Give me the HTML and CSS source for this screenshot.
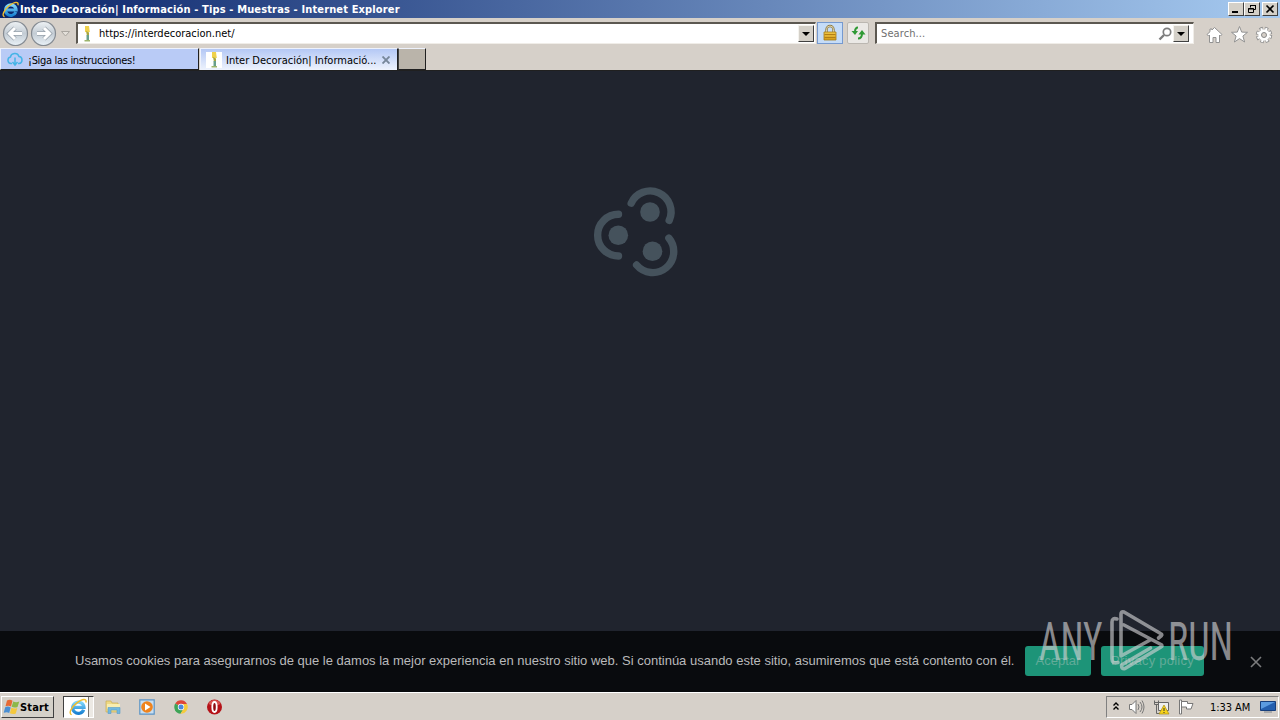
FILE: index.html
```html
<!DOCTYPE html>
<html lang="es">

<head>
    <meta charset="UTF-8" />
    <meta name="viewport" content="width=device-width, initial-scale=1.0" />
    <link rel="stylesheet" href="styles.css">
    <title>Inter Decoración| Información - Tips - Muestras</title>
</head>

<body>
    <svg width="0" height="0" class="defs">
        <defs>
            <linearGradient id="blue" x1="0" y1="0" x2="0" y2="1">
                <stop offset="0" stop-color="#7fd6fb" />
                <stop offset="1" stop-color="#1a82d2" />
            </linearGradient>
            <linearGradient id="gold" x1="0" y1="0" x2="0" y2="1">
                <stop offset="0" stop-color="#f2c94a" />
                <stop offset="1" stop-color="#d39a17" />
            </linearGradient>
            <linearGradient id="nav" x1="0" y1="0" x2="0" y2="1">
                <stop offset="0" stop-color="#eef2f5" />
                <stop offset=".5" stop-color="#c3ccd4" />
                <stop offset="1" stop-color="#e9f1f7" />
            </linearGradient>
            <symbol id="ie" viewBox="0 0 16 16">
                <path d="M13 10.400A5 5 0 1 1 13.300 8.400H4.600" fill="none" stroke="url(#blue)" stroke-width="2.900" />
                <path d="M2.400 14.800C-.8 13.900 2 8.200 7 4.300S15.900.2 15 4" fill="none" stroke="#f0bd2e" stroke-width="1.300" />
            </symbol>
            <symbol id="lamp" viewBox="0 0 16 16">
                <path d="M0 0h16v16H0z" fill="#fff" />
                <path d="M6 0h4l.8 6H6z" fill="#efd14c" />
                <path d="M7 5l3 1.500V10H8z" fill="#a8a640" />
                <path d="M7.500 9h2.500v6H7.500z" fill="#68a08a" />
                <path d="M5.500 14h5.500v1.500H5.500z" fill="#9cb46d" />
            </symbol>
        </defs>
    </svg>

    <header class="titlebar">
        <svg class="ie-icon" width="17" height="17"><use href="#ie" /></svg>
        <h1>Inter Decoración| Información - Tips - Muestras - Internet Explorer</h1>
        <div class="win-btns">
            <button type="button" class="win"><svg width="12" height="10"><path d="M2 8h6" stroke="#000" stroke-width="2" /></svg></button>
            <button type="button" class="win"><svg width="12" height="10" fill="none" stroke="#000"><path d="M4.500 3.500v-2h5v4h-2M4 1.500h6M2.500 4.500h5v4h-5zM2 5h6" /></svg></button>
            <button type="button" class="win close"><svg width="12" height="10"><path d="M2.500 1.500l7 7M9.500 1.500l-7 7" stroke="#000" stroke-width="1.700" /></svg></button>
        </div>
    </header>

    <nav class="toolbar">
        <svg class="nav-btns" width="74" height="30" fill="none">
            <circle cx="15.500" cy="15.500" r="12" fill="url(#nav)" stroke="#858b92" stroke-width="1.200" />
            <circle cx="43.500" cy="15.500" r="12" fill="url(#nav)" stroke="#858b92" stroke-width="1.200" />
            <path d="M22 15.500H10M15 10l-5.500 5.500L15 21" stroke="#98a2ac" stroke-width="4.500" />
            <path d="M37 15.500h12M44 10l5.500 5.500L44 21" stroke="#98a2ac" stroke-width="4.500" />
            <path d="M22 15.500H10M15 10l-5.500 5.500L15 21" stroke="#fff" stroke-width="3" />
            <path d="M37 15.500h12M44 10l5.500 5.500L44 21" stroke="#fff" stroke-width="3" />
            <path d="M61.500 13.500h8l-4 4.500z" fill="#e4e0da" stroke="#aaa6a0" />
        </svg>
        <div class="field address">
            <svg width="16" height="16"><use href="#lamp" /></svg>
            <span class="url">https://interdecoracion.net/</span>
            <button type="button" class="drop"></button>
        </div>
        <button type="button" class="tool lock">
            <svg width="16" height="18">
                <path d="M4.500 9V5.500a3.500 3.500 0 0 1 7 0V9" fill="none" stroke="#8d7a45" stroke-width="2.400" />
                <path d="M4.500 9V5.500a3.500 3.500 0 0 1 7 0V9" fill="none" stroke="#ddd3ac" />
                <path d="M2 8h12v8H2z" fill="url(#gold)" stroke="#a67b18" stroke-width=".8" />
                <path d="M2.500 10.500h11M2.500 13.500h11" stroke="#b27f15" />
            </svg>
        </button>
        <button type="button" class="tool refresh">
            <svg width="18" height="18" fill="none" stroke="#2f9a35" stroke-width="2">
                <path d="M9 3.500C6.500 3.500 6 5 6 8M9 14.500c2.500 0 4-1.500 4-5" />
                <path d="M2.500 7h6.500L6 11zM9.500 10.500h7L13 6z" fill="#2f9a35" stroke="none" />
            </svg>
        </button>
        <div class="field search">
            <span>Search...</span>
            <svg width="15" height="16" fill="none" stroke="#7d7d7d"><circle cx="9" cy="6" r="3.700" stroke-width="1.700" /><path d="M6 9l-4.500 4.500" stroke-width="2.400" /></svg>
            <button type="button" class="drop"></button>
        </div>
        <svg class="commands" width="72" height="20" fill="#fff" stroke="#929292">
            <path d="M8.500 2.500l7.500 7-1.500 1.500-1-1v7.500h-3.500v-5H7v5H3.500V10l-1 1L1 9.500 4 6.700V4h2v1z" />
            <path d="M33.500 1.500l2.200 5.600 5.800.2-4.600 3.700 1.700 6-5.100-3.400-5.100 3.400 1.700-6-4.600-3.700 5.800-.2z" />
            <circle cx="58" cy="10" r="6" stroke-width="4.500" stroke-dasharray="3 1.712" />
            <circle cx="58" cy="10" r="5.300" stroke-width="1.500" />
            <circle cx="58" cy="10" r="5.800" stroke="#fff" stroke-width="3" stroke-dasharray="1.800 2.755" stroke-dashoffset="-.6" />
            <circle cx="58" cy="10" r="4.800" stroke="none" />
            <circle cx="58" cy="10" r="2.500" fill="#d6d0c9" stroke="#888" />
        </svg>
    </nav>

    <div class="tabs">
        <div class="tab">
            <svg width="16" height="16" fill="none" stroke="#45b4e6" stroke-width="1.500">
                <path d="M5 12.500H4A3.300 3.300 0 0 1 3.500 6C4 2 10.500 1 12 5.500c4 .3 4 6.500 0 7h-1M8 6.500v7M5.500 11L8 14l2.500-3" />
            </svg>
            <span>¡Siga las instrucciones!</span>
        </div>
        <div class="tab active">
            <svg width="16" height="16"><use href="#lamp" /></svg>
            <span>Inter Decoración| Informació...</span>
            <svg class="tab-close" width="8" height="8"><path d="M.5.5l7 7M7.500.5l-7 7" stroke="#77879a" stroke-width="1.900" /></svg>
        </div>
        <div class="tab new"></div>
    </div>

    <main class="page">
        <svg class="loader" width="90" height="94" viewBox="590 185 90 94" fill="none" stroke="#45525c" stroke-width="7.400" stroke-linecap="round">
            <path d="M618.500 214.300a20 20 0 0 0 0 41.700" />
            <path d="M631.200 203.200a20 20 0 0 1 38 17.200" />
            <path d="M668.900 238.200a20 20 0 0 1-32.300 26.800" />
            <g fill="#45525c" stroke="none">
                <circle cx="618.300" cy="235.200" r="9.800" />
                <circle cx="650" cy="212" r="9.800" />
                <circle cx="652.500" cy="251.300" r="9.800" />
            </g>
        </svg>
        <div class="cookies">
            <p>Usamos cookies para asegurarnos de que le damos la mejor experiencia en nuestro sitio web. Si continúa usando este sitio, asumiremos que está contento con él.</p>
            <button type="button" class="btn accept">Aceptar</button>
            <button type="button" class="btn policy">Privacy policy</button>
            <svg class="cookie-close" width="12" height="12"><path d="M1 1l10 10M11 1L1 11" stroke="#7b7c7d" stroke-width="1.600" /></svg>
        </div>
        <svg class="watermark" width="200" height="70" viewBox="1035 605 200 70">
            <text x="1039" y="659.500" textLength="63.500" lengthAdjust="spacingAndGlyphs">ANY</text>
            <text x="1168" y="659.500" textLength="65" lengthAdjust="spacingAndGlyphs">RUN</text>
            <path d="M1117 619q-5-1.500-5 3V659q0 5 6 3.500M1158.500 638l3-2.500q1-1-1-2L1124 612q-3-1-3 2V656l30-16.500M1124 625l37 19.500q2 1.500 0 2.500l-36 21.500q-3.500 1-3.500-3.500l29-17" />
        </svg>
    </main>

    <footer class="taskbar">
        <button type="button" class="start">
            <svg width="17" height="16">
                <path d="M4 1.500q3-1.500 5.500.3L8 7.500q-2.500-1.600-5.500-.2z" fill="#e66a35" />
                <path d="M10.300 2.500q2.700 1.500 6 0L14.500 8q-3 1.200-5.900-.2z" fill="#8cb84a" />
                <path d="M2.200 8.200q2.800-1.400 5.500.2L6.200 14q-2.200-1.500-5.500-.2z" fill="#4a8fd3" />
                <path d="M8.400 8.800q2.800 1.400 5.900.2l-1.500 5.500q-3 1.200-5.900-.3z" fill="#f4c83d" />
            </svg>
            <span>Start</span>
        </button>
        <div class="task current"><svg width="18" height="18"><use href="#ie" /></svg></div>
        <div class="quick">
            <svg width="16" height="16">
                <path d="M1 2h5l1 2h6v9H1z" fill="#eed985" stroke="#c9ad54" stroke-width=".7" />
                <path d="M2 5h13v5H2z" fill="#f8edb0" />
                <path d="M3 14.500V8.500h12v6h-3V11H6v3.500z" fill="#72b8df" stroke="#579cc7" stroke-width=".6" />
            </svg>
            <svg width="16" height="16">
                <path d="M.8.8h14.400v14.400H.8z" fill="#c8def1" stroke="#5c94c5" stroke-width="1.200" />
                <circle cx="8" cy="8" r="5.800" fill="#ef831d" />
                <path d="M6 4.500v7L11.500 8z" fill="#fff" />
            </svg>
            <svg width="16" height="16">
                <path d="M8 8L2.200 4.600A6.700 6.700 0 0 1 14 5z" fill="#de4639" />
                <path d="M8 8L2.200 4.600A6.700 6.700 0 0 0 7.500 14.700l3-4.700z" fill="#3ea457" />
                <path d="M8 5h6a6.700 6.700 0 0 1-6.500 9.700L11 9z" fill="#f5cb3c" />
                <circle cx="8" cy="8" r="3.200" fill="#fff" />
                <circle cx="8" cy="8" r="2.500" fill="#4b89dd" />
            </svg>
            <svg width="16" height="16">
                <circle cx="7.500" cy="8" r="7.500" fill="#b51218" />
                <path d="M1.500 5a6.500 6.500 0 0 1 12 0q-6 3-12 0z" fill="#d8534f" />
                <ellipse cx="7.500" cy="8" rx="2.200" ry="5" fill="#8e0c10" stroke="#fff" stroke-width="1.800" />
            </svg>
        </div>
        <div class="tray">
            <svg width="8" height="12" fill="none" stroke="#000" stroke-width="1.400"><path d="M1.500 4.500L4 2l2.500 2.500M1.500 8.500L4 6l2.500 2.500" /></svg>
            <svg width="17" height="16" fill="none" stroke="#777">
                <path d="M1.500 5.500h2.500l4-4v13l-4-4H1.500z" fill="#fff" />
                <path d="M10 5q2 3 0 6M12 3q4 5 0 10M14 1.500q4 6.500 0 13" />
            </svg>
            <svg width="17" height="16" fill="#eee" stroke="#666">
                <path d="M5.500 3.500h10v8h-10z" />
                <path d="M1.500 1.500v4h4v-4M3.500 5.500v9h6M1.500 3.500h4" fill="none" />
                <path d="M11 6l5 9H6z" fill="#f7d319" stroke="#a98c12" stroke-width=".7" />
                <path d="M11 9v3M11 13v1" stroke="#333" />
            </svg>
            <svg width="17" height="16" fill="#fff" stroke="#777">
                <path d="M1.500 1h2v14h-2z" />
                <path d="M3.500 2.500h6v2h5.500l-2 5.500h-4.500v-2h-5z" />
            </svg>
            <span class="clock">1:33 AM</span>
            <svg width="16" height="14">
                <path d="M.5 1.500h15v9H.5z" fill="#245fae" stroke="#173f7c" />
                <path d="M1 2h14L1 9z" fill="#5b9be0" />
                <path d="M4 11h8v2H4z" fill="#aaa" />
            </svg>
        </div>
    </footer>
</body>

</html>
```
FILE: styles.css
```css
* {
    margin: 0;
    padding: 0;
    box-sizing: border-box;
}

body {
    width: 1280px;
    height: 720px;
    overflow: hidden;
    display: flex;
    flex-direction: column;
    background-color: #d6d0c9;
    font-family: "DejaVu Sans Condensed", "DejaVu Sans", sans-serif;
    font-stretch: condensed;
    font-size: 11px;
    color: #000;
}

svg {
    display: block;
    flex: none;
}

span,
h1,
p {
    white-space: nowrap;
}

button {
    font: inherit;
    border: none;
}

.defs {
    position: absolute;
}

.titlebar {
    height: 18px;
    flex: none;
    display: flex;
    align-items: center;
    padding: 0 2px;
    background: linear-gradient(to right, #0a246a, #a6caf0);
}

.titlebar h1 {
    flex: 1;
    margin-left: 1px;
    font-size: 11px;
    font-weight: bold;
    letter-spacing: 0.14px;
    color: #fff;
}

.win-btns {
    display: flex;
}

.win {
    width: 16px;
    height: 14px;
    padding: 1px;
    background-color: #d4d0c8;
    border: 1px solid;
    border-color: #fff #404040 #404040 #fff;
}

.win.close {
    margin-left: 2px;
}

.toolbar {
    height: 30px;
    flex: none;
    display: flex;
    align-items: center;
}

.nav-btns {
    margin-right: 2px;
}

.field {
    height: 22px;
    display: flex;
    align-items: center;
    background-color: #fff;
    border: 1px solid;
    border-width: 2px 1px 1px 2px;
    border-color: #5c5851 #f0ede8 #f0ede8 #5c5851;
}

.address {
    width: 740px;
    padding: 0 1px;
}

.url {
    flex: 1;
    margin-left: 4px;
}

.drop {
    width: 16px;
    height: 17px;
    display: flex;
    align-items: center;
    justify-content: center;
    background-color: #d4d0c8;
    border: 1px solid;
    border-color: #f5f3ee #404040 #404040 #f5f3ee;
}

.drop::before {
    content: "";
    border: 4px solid transparent;
    border-top-color: #000;
    border-bottom: none;
}

.tool {
    height: 22px;
    display: flex;
    align-items: center;
    justify-content: center;
}

.lock {
    width: 26px;
    margin-left: 1px;
    background-color: #c5dcf8;
    border: 1px solid #7599cf;
}

.refresh {
    width: 22px;
    margin: 0 6px 0 4px;
    background-color: #eae8e5;
    border: 1px solid #bbb7b1;
    border-radius: 2px;
}

.search {
    width: 319px;
    padding: 0 4px;
    color: #707070;
}

.search span {
    flex: 1;
    letter-spacing: 0.1px;
}

.commands {
    margin: 4px 0 0 12px;
}

.tabs {
    height: 23px;
    flex: none;
    display: flex;
    border-bottom: 1px solid #202020;
}

.tab {
    width: 199px;
    height: 22px;
    display: flex;
    align-items: center;
    padding-left: 6px;
    background-color: #b9cbf6;
    border: 1px solid;
    border-color: #eef2fc #202020 #202020 #eef2fc;
}

.tab span {
    margin-top: 2px;
    margin-left: 5px;
    letter-spacing: -0.32px;
}

.tab.active {
    width: 198px;
    margin-left: 1px;
    padding-left: 5px;
    background: linear-gradient(#b4c8f5, #eef3fd);
    border-bottom: none;
}

.tab.active span {
    margin-top: 1px;
    margin-left: 4px;
    letter-spacing: 0;
}

.tab-close {
    margin: 0 7px 0 auto;
}

.tab.new {
    width: 28px;
    background-color: #bab4aa;
    border-left-color: #404040;
}

.page {
    height: 621px;
    position: relative;
    display: flex;
    flex-direction: column;
    justify-content: space-between;
    background-color: #20242e;
}

.loader {
    margin: 114px 0 0 590px;
}

.cookies {
    height: 61px;
    display: flex;
    align-items: center;
    padding-left: 75px;
    background-color: #090b0e;
    font-family: "Liberation Sans", Arial, sans-serif;
    font-size: 13px;
    color: #b9babb;
}

.cookies p {
    width: 950px;
    margin-top: -2px;
}

.btn {
    height: 30px;
    margin-top: -2px;
    background-color: #1d9478;
    border-radius: 3px;
    color: #62ab99;
}

.accept {
    width: 66px;
}

.policy {
    width: 103px;
    margin-left: 10px;
    letter-spacing: 0.25px;
}

.cookie-close {
    margin-left: 46px;
}

/* lies over the cookie bar and its buttons */
.watermark {
    position: absolute;
    right: 45px;
    bottom: 17px;
    overflow: visible;
    opacity: 0.62;
}

.watermark text {
    font-family: Roboto, sans-serif;
    font-size: 53px;
    font-weight: 400;
    fill: #d4d4d6;
}

.watermark path {
    fill: none;
    stroke: #d4d4d6;
    stroke-width: 3.6;
    stroke-linecap: round;
    stroke-linejoin: round;
}

.taskbar {
    height: 28px;
    flex: none;
    display: flex;
    align-items: center;
    padding: 1px 1px 0;
    border-top: 1px solid #fff;
}

.start {
    width: 53px;
    height: 22px;
    display: flex;
    align-items: center;
    padding-left: 1px;
    background-color: #d4d0c8;
    border: 1px solid;
    border-color: #fff #404040 #404040 #fff;
    font-weight: bold;
}

.start span {
    letter-spacing: 0.15px;
}

.task {
    width: 31px;
    height: 22px;
    margin-left: 9px;
    padding: 1px 5px;
    background-color: #fff;
    border: 1px solid;
    border-color: #404040 #fff #fff #404040;
    box-shadow: inset -4px 0 #ece9e4, inset -5px 0 #77736d;
}

.quick {
    display: flex;
    gap: 18px;
    margin-left: 11px;
}

.tray {
    width: 173px;
    height: 22px;
    display: flex;
    align-items: center;
    margin-left: auto;
    padding-left: 5px;
    border: 1px solid;
    border-color: #808080 #fff #fff #808080;
}

.tray svg + svg {
    margin-left: 8px;
}

.clock {
    margin: 0 10px 0 15px;
    letter-spacing: -0.05px;
}
```
